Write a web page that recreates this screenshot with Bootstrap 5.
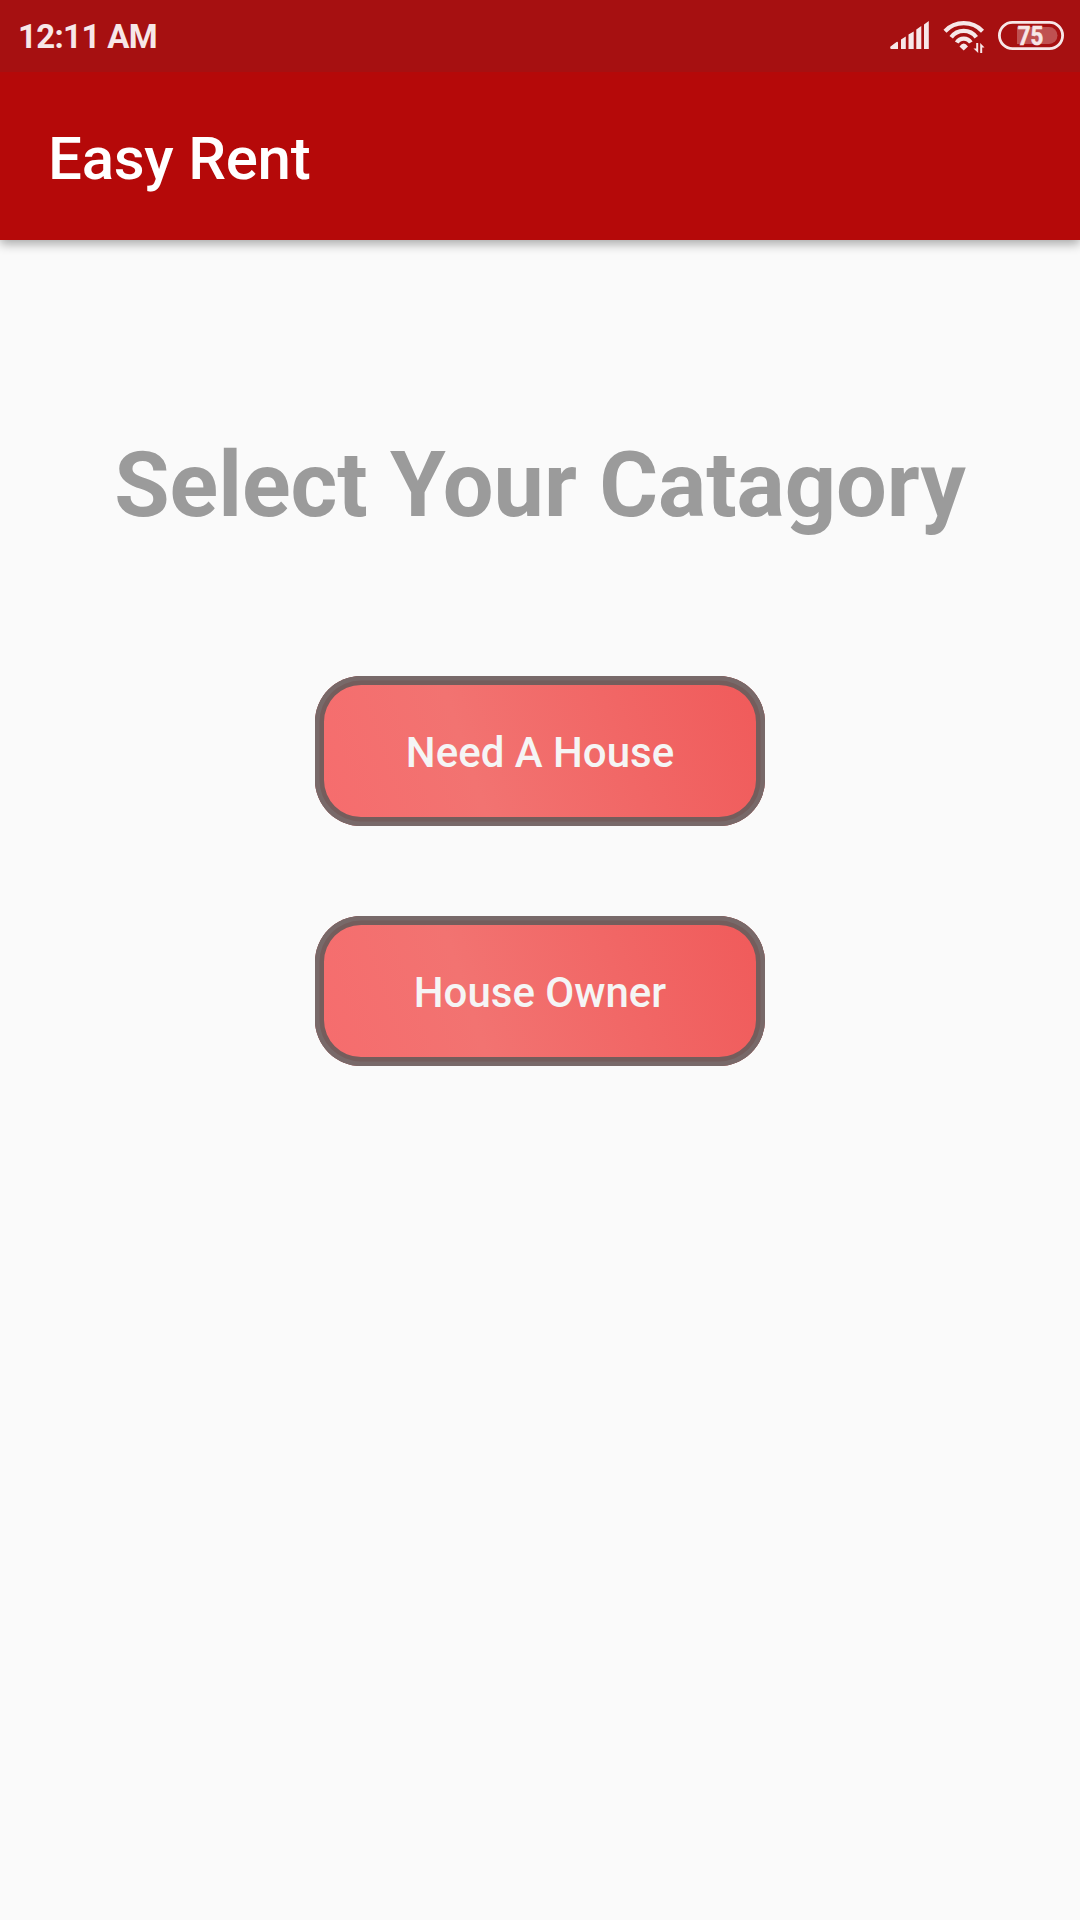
<!DOCTYPE html>
<html lang="en">
<head>
<meta charset="utf-8">
<meta name="viewport" content="width=device-width, initial-scale=1">
<title>Easy Rent</title>
<link href="https://cdn.jsdelivr.net/npm/bootstrap@5.3.0/dist/css/bootstrap.min.css" rel="stylesheet">
<style>
body { font-family: Roboto, "Liberation Sans", sans-serif; background: #fafafa; min-height: 1920px; }
.top-area { background: #b50909; box-shadow: 0 4px 10px rgba(0,0,0,.33); }
.status-bar { height: 72px; background: #a61011; color: #f7e7e8; padding: 0 16px 0 18px; }
.clock { font-size: 33px; line-height: 72px; font-weight: 700; padding-top: 1px; letter-spacing: -.68px; }
.app-bar { height: 168px; padding: 6px 48px 0; }
.app-title { font-size: 60px; font-weight: 500; line-height: 72px; color: #fff; margin: 0; letter-spacing: -.25px; }
.heading { font-size: 90px; font-weight: 700; line-height: 106px; color: #9b9b9b; margin: 193px 0 137px; white-space: nowrap; letter-spacing: -.05px; }
.choice { width: 450px; height: 150px; border: 0; border-radius: 46px; padding: 2px 0 0; font-size: 42px; font-weight: 500; color: #f5f5f5;
  background: linear-gradient(71.565deg, #f66c6d 0%, #f27371 35%, #f05a5a 100%);
  box-shadow: inset 0 0 0 4.5px #786969, inset 0 0 0 9px #745d5c; }
.choice:hover { color: #f5f5f5; }
.choices { gap: 90px; }
</style>
</head>
<body>
<header class="top-area">
  <div class="status-bar d-flex align-items-center justify-content-between">
    <span class="clock">12:11 AM</span>
    <svg width="176" height="36" viewBox="888 18 176 36" fill="#f7e7e8" role="img" aria-label="Signal, Wi-Fi and battery">
      <path d="M890.500 46.500 L896.500 42 Q898 41.200 898 43 V49 H891.500 Q889.500 48.500 890.500 46.500Z M901 39.500 L905.800 36.500 V49 H901Z M908.500 34.500 L913.700 31.500 V49 H908.500Z M916.300 29.500 L921.300 26 V49 H916.300Z M924 24.500 L928.800 21 V49 H924Z"/>
      <g fill="none" stroke="#f7e7e8" stroke-width="4.200">
        <path d="M945 31.200 A26 26 0 0 1 982.500 31.200"/>
        <path d="M951.200 37.200 A15.500 15.500 0 0 1 976.300 37.200"/>
        <path d="M956.700 42.500 A8.300 8.300 0 0 1 970.800 42.500"/>
      </g>
      <path d="M959.500 46.500 Q963.700 40.500 968 46.500 L963.700 50.500Z"/>
      <path d="M978.200 43 V53 L973.500 48.500 H976.200 V43Z M980.200 53 V43 L984.500 47.500 H982.200 V53Z"/>
      <rect x="999.400" y="22.400" width="63.200" height="26.200" rx="13.100" fill="none" stroke="#f7e7e8" stroke-width="2.800"/>
      <path d="M1017 27 H1049 A8.500 8.500 0 0 1 1049 44 H1017Z" opacity=".3"/>
      <text x="1030.500" y="44.700" text-anchor="middle" font-family="Roboto" font-weight="700" font-size="26" textLength="25.500" lengthAdjust="spacingAndGlyphs" stroke="#f7e7e8" stroke-width=".6">75</text>
    </svg>
  </div>
  <nav class="app-bar navbar"><h1 class="app-title">Easy Rent</h1></nav>
</header>
<main class="d-flex flex-column align-items-center">
  <h2 class="heading">Select Your Catagory</h2>
  <div class="choices d-flex flex-column">
    <button type="button" class="btn choice">Need A House</button>
    <button type="button" class="btn choice">House Owner</button>
  </div>
</main>
<script src="https://cdn.jsdelivr.net/npm/bootstrap@5.3.0/dist/js/bootstrap.bundle.min.js"></script>
</body>
</html>
